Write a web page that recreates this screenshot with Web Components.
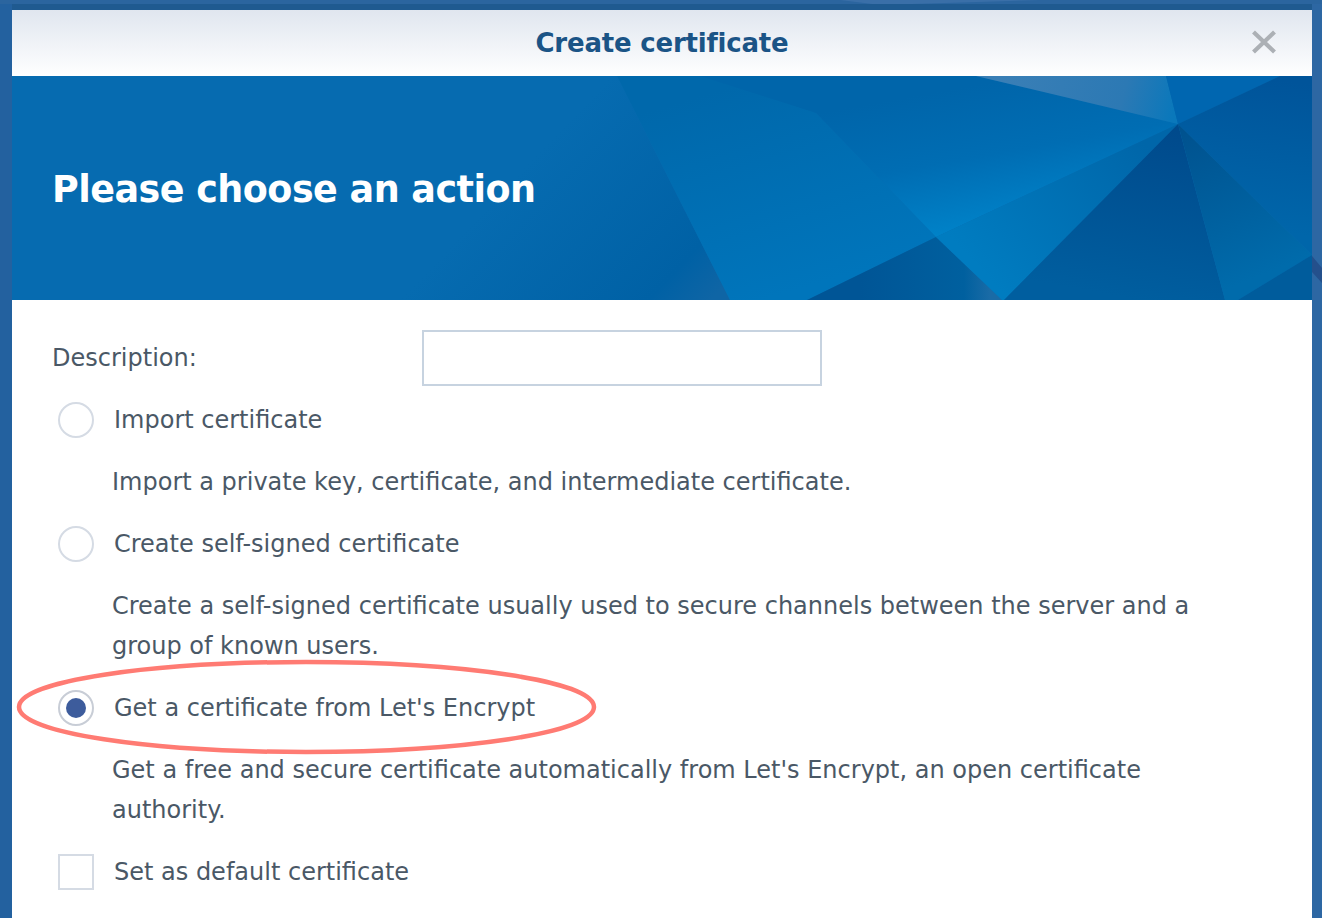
<!DOCTYPE html>
<html><head><meta charset="utf-8"><style>
html,body{margin:0;padding:0;height:100%;overflow:hidden;background:#23609f}
body{font-family:"DejaVu Sans",sans-serif}
</style></head><body>
<cert-wallpaper></cert-wallpaper>
<cert-dialog heading="Create certificate">
  <cert-banner slot="banner">Please choose an action</cert-banner>
  <cert-field label="Description:"></cert-field>
  <cert-option type="radio" label="Import certificate">Import a private key, certificate, and intermediate certificate.</cert-option>
  <cert-option type="radio" label="Create self-signed certificate">Create a self-signed certificate usually used to secure channels between the server and a group of known users.</cert-option>
  <cert-option type="radio" checked circled label="Get a certificate from Let's Encrypt">Get a free and secure certificate automatically from Let's Encrypt, an open certificate authority.</cert-option>
  <cert-option type="checkbox" label="Set as default certificate"></cert-option>
</cert-dialog>
<script>
function def(name, html, init){
  customElements.define(name, class extends HTMLElement{
    connectedCallback(){
      if(this.shadowRoot) return;
      const r=this.attachShadow({mode:'open'});
      r.innerHTML=html;
      if(init) init(r,this);
    }
  });
}
def('cert-wallpaper',`<style>
:host{position:fixed;inset:0;display:block}
svg{width:1322px;height:918px;display:block}
</style><svg viewBox="0 0 1322 918"><rect width="1322" height="918" fill="#23619f"/>
<rect x="1312" width="10" height="918" fill="#2d67a3"/><rect width="1322" height="4" fill="#2b659f"/>
<path d="M840 0 L880 5 L1040 0Z" fill="#3a6fa8"/><path d="M1312 256 L1322 268 L1322 283 L1312 272Z" fill="#24508c"/></svg>`);
def('cert-dialog',`<style>
:host{display:block;position:relative;margin:4px 10px 0 12px;border-top:6px solid #1f5a90;background:#fff;height:914px;box-sizing:border-box;overflow:hidden}
.head{height:66px;display:flex;align-items:center;justify-content:center;position:relative;background:linear-gradient(#e0e6ef,#fff);color:#1b5486;font-weight:700;font-size:26px;letter-spacing:-.2px}
.x{position:absolute;right:35px;top:20px;width:26px;height:24px;filter:blur(.4px)}
.body{padding:30px 62px 0 40px;display:flex;flex-direction:column}
</style><div class="head"><span id="t"></span><svg class="x" viewBox="0 0 26 24"><path d="M2.500 2 L23.500 22 M23.500 2 L2.500 22" stroke="#acb0b5" stroke-width="4.200" fill="none"/></svg></div>
<slot name="banner"></slot><div class="body"><slot></slot></div>`,(r,h)=>{r.getElementById('t').textContent=h.getAttribute('heading')});
def('cert-banner',`<style>
:host{display:flex;align-items:center;height:224px;padding-left:40px;position:relative;background:#066bb0;color:#fff;font-weight:700;font-size:36.500px;letter-spacing:-.52px;overflow:hidden}
svg{position:absolute;left:0;top:0;width:1300px;height:224px}
span{position:relative;padding-top:3px}
</style><svg viewBox="12 76 1300 224" preserveAspectRatio="none">
<defs>
<linearGradient id="gf" gradientUnits="userSpaceOnUse" x1="560" y1="130" x2="725" y2="285"><stop offset="0" stop-color="#066bb0"/><stop offset=".8" stop-color="#0061a5"/><stop offset="1" stop-color="#0f65a5"/></linearGradient>
<linearGradient id="gl" gradientUnits="userSpaceOnUse" x1="720" y1="90" x2="780" y2="295"><stop offset="0" stop-color="#0068ab"/><stop offset="1" stop-color="#0075bb"/></linearGradient>
<linearGradient id="gb" gradientUnits="userSpaceOnUse" x1="920" y1="95" x2="945" y2="235"><stop offset="0" stop-color="#0065aa"/><stop offset=".5" stop-color="#006db3"/><stop offset="1" stop-color="#0082c8"/></linearGradient>
<linearGradient id="gt" gradientUnits="userSpaceOnUse" x1="1000" y1="80" x2="1170" y2="125"><stop offset="0" stop-color="#3a7fb6"/><stop offset=".7" stop-color="#2c79b4"/><stop offset="1" stop-color="#0a78bb"/></linearGradient>
<linearGradient id="gd" gradientUnits="userSpaceOnUse" x1="1170" y1="130" x2="1140" y2="300"><stop offset="0" stop-color="#004a8c"/><stop offset="1" stop-color="#005e9f"/></linearGradient>
<linearGradient id="gm" gradientUnits="userSpaceOnUse" x1="1000" y1="290" x2="1150" y2="150"><stop offset="0" stop-color="#007cc0"/><stop offset="1" stop-color="#0066a9"/></linearGradient>
<linearGradient id="gk" gradientUnits="userSpaceOnUse" x1="860" y1="290" x2="990" y2="290"><stop offset="0" stop-color="#005596"/><stop offset=".8" stop-color="#00609f"/><stop offset="1" stop-color="#1a6ba6"/></linearGradient>
<linearGradient id="gr" gradientUnits="userSpaceOnUse" x1="1190" y1="130" x2="1250" y2="280"><stop offset="0" stop-color="#00528f"/><stop offset="1" stop-color="#006bab"/></linearGradient>
<linearGradient id="gq" gradientUnits="userSpaceOnUse" x1="1280" y1="80" x2="1260" y2="230"><stop offset="0" stop-color="#00549a"/><stop offset="1" stop-color="#0066aa"/></linearGradient>
</defs>
<polygon points="12,76 617,76 730,300 12,300" fill="url(#gf)"/>
<polygon points="617,76 976,76 816,113 936,237 807,300 730,300" fill="url(#gl)"/>
<polygon points="700,76 976,76 1178,124 936,237 816,113" fill="url(#gb)"/>
<polygon points="976,76 1166,76 1178,124" fill="url(#gt)"/>
<polygon points="1166,76 1280,76 1178,124" fill="#0066b0"/>
<polygon points="1280,76 1312,76 1312,255 1178,124" fill="url(#gq)"/>
<polygon points="936,237 807,300 1002,300" fill="url(#gk)"/>
<polygon points="936,237 1178,124 1004,300 1002,300" fill="url(#gm)"/>
<polygon points="1178,124 1004,300 1225,300" fill="url(#gd)"/>
<polygon points="1178,124 1312,255 1238,300 1225,300" fill="url(#gr)"/>
<polygon points="1312,255 1312,300 1238,300" fill="#005c9c"/>
</svg><span><slot></slot></span>`);
def('cert-field',`<style>
:host{display:flex;align-items:center;height:56px;font-size:24px;color:#4a5866}
label{width:370px;flex:none}
.i{width:400px;height:56px;box-sizing:border-box;border:2px solid #c7d3e0;background:#fff}
</style><label id="l"></label><div class="i"></div>`,(r,h)=>{r.getElementById('l').textContent=h.getAttribute('label')});
def('cert-option',`<style>
:host{display:block;font-size:24px;color:#4a5866}
.row{display:flex;align-items:center;height:40px;position:relative;margin-top:14px}
.m{flex:none;width:36px;height:36px;box-sizing:border-box;margin:0 20px 0 6px;border:2.500px solid #d5dbe4;background:#fff;display:flex;align-items:center;justify-content:center}
.radio{border-radius:50%}
.dot{width:20px;height:20px;border-radius:50%;background:#3d5c9c}
.desc{margin-left:60px;line-height:40px;padding:22px 0 8px}
svg{position:absolute;left:-52px;top:-48px;width:640px;height:130px;overflow:visible}
</style><div class="row"><span class="m" id="m"></span><span id="l"></span></div><div class="desc"><slot></slot></div>`,(r,h)=>{
  r.getElementById('l').textContent=h.getAttribute('label');
  const m=r.getElementById('m');
  if(h.getAttribute('type')==='radio') m.classList.add('radio');
  if(h.hasAttribute('checked')){ m.innerHTML='<span class="dot"></span>'; m.style.borderColor='#c8cdd6'; }
  if(!h.textContent.trim()) r.querySelector('.desc').style.display='none';
  if(h.hasAttribute('circled')){
    r.querySelector('.row').insertAdjacentHTML('beforeend','<svg viewBox="0 640 640 130"><path d="M19 707 C19 681 150 662 306 662 C462 662 594 681 594 707 C594 733 462 752 306 752 C150 752 19 733 19 707Z" fill="none" stroke="#ff7b73" stroke-width="4.500"/></svg>');
  }
});
</script></body></html>
